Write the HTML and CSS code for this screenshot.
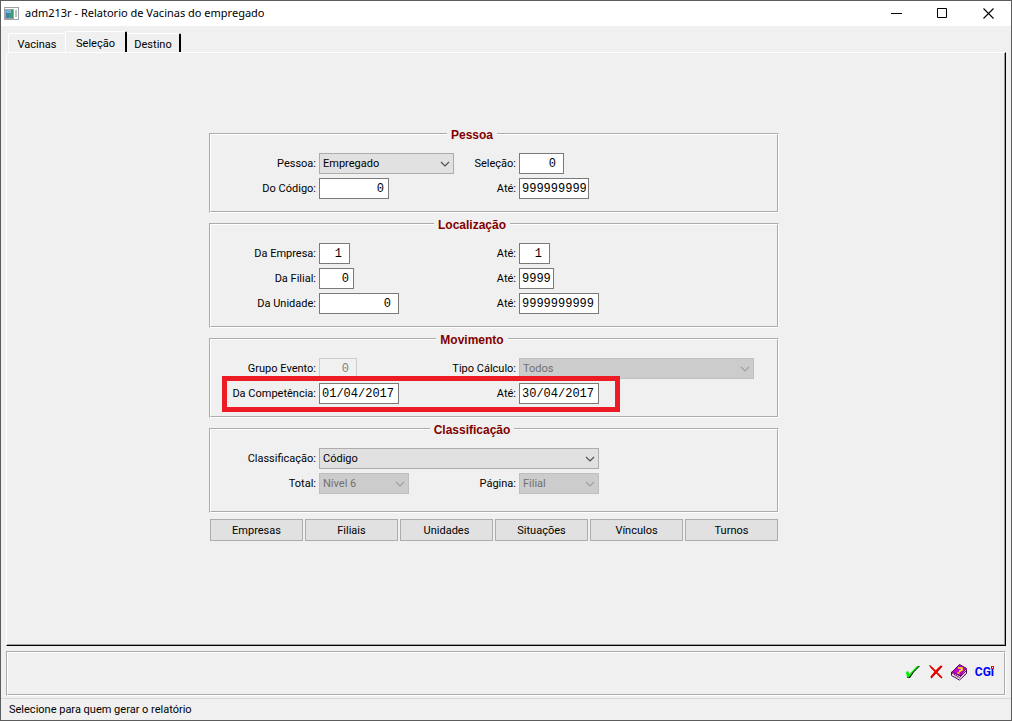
FILE: index.html
```html
<!DOCTYPE html>
<html lang="pt-BR">
<head>
<meta charset="utf-8">
<title>adm213r - Relatorio de Vacinas do empregado</title>
<link rel="stylesheet" href="styles.css">
</head>
<body>
<div class="window">
  <header class="titlebar">
    <svg class="app-icon" width="15" height="13" viewBox="0 0 15 13" shape-rendering="crispEdges" aria-hidden="true">
      <path fill="#9da3a8" d="M0 0h15v13H0z"/><path fill="#fff" d="M1 1h13v1H1zM10 2h4v10h-4z"/>
      <path fill="#3f7fa3" d="M2 3h3v8H2z"/><path fill="#3f9a78" d="M5 3h4v8H5z"/><path fill="#71b3d0" d="M2 3h5v3H2z"/><path fill="#bcc2c8" d="M11 3h2v7h-2z"/>
    </svg>
    <h1 class="title">adm213r - Relatorio de Vacinas do empregado</h1>
    <div class="window-controls">
      <button class="win-button" aria-label="Minimizar"><svg width="11" height="11" viewBox="0 0 11 11"><path d="M0 5.5h11" stroke="#000"/></svg></button>
      <button class="win-button" aria-label="Maximizar"><svg width="11" height="11" viewBox="0 0 11 11"><path d="M.5 .5h9v9h-9z" fill="none" stroke="#000"/></svg></button>
      <button class="win-button" aria-label="Fechar"><svg width="11" height="11" viewBox="0 0 11 11"><path d="M.5 .5l10 10M10.500 .5l-10 10" stroke="#000" stroke-width="1.100"/></svg></button>
    </div>
  </header>

  <nav class="tabs" role="tablist">
    <button class="tab tab-first" role="tab">Vacinas</button>
    <button class="tab tab-active" role="tab" aria-selected="true">Seleção</button>
    <button class="tab tab-last" role="tab">Destino</button>
  </nav>

  <main class="panel">
    <form class="form">
      <fieldset class="group">
        <legend>Pessoa</legend>
        <label for="pessoa">Pessoa:</label>
        <select id="pessoa" class="w-135"><option>Empregado</option></select>
        <label for="selecao">Seleção:</label>
        <input id="selecao" class="w-45 number spaced" value="0">
        <label for="codigo">Do Código:</label>
        <input id="codigo" class="w-70 number" value="0">
        <label for="codigo-ate">Até:</label>
        <input id="codigo-ate" class="w-70" value="999999999">
      </fieldset>

      <fieldset class="group">
        <legend>Localização</legend>
        <label for="empresa">Da Empresa:</label>
        <input id="empresa" class="w-31 number spaced" value="1">
        <label for="empresa-ate">Até:</label>
        <input id="empresa-ate" class="w-31 number spaced" value="1">
        <label for="filial">Da Filial:</label>
        <input id="filial" class="w-35 number" value="0">
        <label for="filial-ate">Até:</label>
        <input id="filial-ate" class="w-35" value="9999">
        <label for="unidade">Da Unidade:</label>
        <input id="unidade" class="w-80 number spaced" value="0">
        <label for="unidade-ate">Até:</label>
        <input id="unidade-ate" class="w-80" value="9999999999">
      </fieldset>

      <fieldset class="group">
        <legend>Movimento</legend>
        <label for="grupo">Grupo Evento:</label>
        <input id="grupo" class="w-38 number spaced" value="0" disabled>
        <label for="tipo">Tipo Cálculo:</label>
        <select id="tipo" class="w-235" disabled><option>Todos</option></select>
        <label for="competencia">Da Competência:</label>
        <input id="competencia" class="w-80" value="01/04/2017">
        <label for="competencia-ate">Até:</label>
        <input id="competencia-ate" class="w-80" value="30/04/2017">
        <div class="highlight"></div>
      </fieldset>

      <fieldset class="group group-tall">
        <legend>Classificação</legend>
        <label for="classificacao">Classificação:</label>
        <select id="classificacao" class="span-all w-280"><option>Código</option></select>
        <label for="total">Total:</label>
        <select id="total" class="w-90" disabled><option>Nível 6</option></select>
        <label for="pagina">Página:</label>
        <select id="pagina" class="w-80" disabled><option>Filial</option></select>
      </fieldset>

      <div class="actions">
        <button type="button">Empresas</button>
        <button type="button">Filiais</button>
        <button type="button">Unidades</button>
        <button type="button">Situações</button>
        <button type="button">Vínculos</button>
        <button type="button">Turnos</button>
      </div>
    </form>
  </main>

  <div class="toolbar">
    <button class="tool" aria-label="Confirmar"><svg width="16" height="16" viewBox="0 0 16 16">
      <path fill="#000" d="M3 8l1 1 1 2 9-9h2L10 8l-4 6H3z"/>
      <path fill="#0e0" d="M2 8l2-1 1.500 3L13 2h2L9 8l-4 5.500H3z"/>
    </svg></button>
    <button class="tool" aria-label="Cancelar"><svg width="16" height="16" viewBox="0 0 16 16">
      <path d="M4 3l11 11M15 2L4 14" stroke="#900" stroke-width="1.500"/><path d="M3 2l5 5 6 6M14 2L9 7l-5 6" fill="none" stroke="#f00" stroke-width="1.500"/><path fill="#888" d="M2 1h2v1H2z"/>
    </svg></button>
    <button class="tool" aria-label="Ajuda"><svg width="18" height="18" viewBox="0 0 18 18">
      <path d="M9.500 5l7 1.500v4l-7 6.500-8-4.500V9z" fill="#fff" stroke="#500050"/>
      <path d="M9.500 1.500l7 4-6.500 7.500-8-4z" fill="#c800c8" stroke="#600060"/>
      <path d="M2 10l7.500 4.500L16 8" fill="none" stroke="#800080"/><path d="M4 12.500l6 3 6-5.500" fill="none" stroke="#aaa"/>
      <path d="M8 5h4v2L9 8.500M7.500 10h2" fill="none" stroke="#ff0" stroke-width="1.400"/>
    </svg></button>
    <button class="tool brand"><span>CGi</span><svg class="brand-dot" width="3" height="3" viewBox="0 0 3 3" aria-hidden="true"><path fill="#f00" d="M0 0h3v3H0z"/><path fill="#fff" d="M1 1h1v1H1z"/></svg></button>
  </div>

  <footer class="status">Selecione para quem gerar o relatório</footer>
</div>
</body>
</html>
```
FILE: styles.css
```css
* { box-sizing: border-box; }

body {
  margin: 0;
  background: #f0f0f0;
  color: #000;
  font: 11px/13px Roboto, "Liberation Sans", sans-serif;
}

button, select { font: inherit; color: inherit; }
button { padding: 0; border: 0; background: none; }

.window {
  display: flex;
  flex-direction: column;
  min-height: 100vh;
  border: 1px solid #5c5c5c;
}

.titlebar {
  display: flex;
  align-items: center;
  height: 25px;
  padding-left: 3px;
  background: #fff;
}
.title {
  flex: 1;
  margin: 0 0 0 6px;
  padding-bottom: 2px;
  font: 11px/16px "Noto Sans", "Open Sans", sans-serif;
}
.window-controls { display: flex; }
.win-button {
  display: grid;
  place-items: center;
  width: 46px;
  height: 25px;
}

.tabs {
  display: flex;
  align-items: flex-end;
  height: 26px;
  padding: 0 7px;
}
.tab {
  height: 19px;
  padding-top: 2px;
  border-top: 1px solid #fff;
  border-radius: 2px 2px 0 0;
}
.tab-first { width: 57px; border-left: 1px solid #fff; }
.tab-active {
  width: 62px;
  height: 21px;
  border-left: 1px solid #fff;
  border-right: 2px solid #000;
}
.tab-last { width: 54px; border-right: 2px solid #000; }

.panel {
  flex: 1;
  display: flex;
  justify-content: center;
  margin: 0 5px;
  padding: 74px 24px 74px 0;
  border: 1px solid #fff;
  border-right-color: #000;
  border-bottom-color: #000;
  box-shadow: inset -1px -1px #a0a0a0;
}

.form {
  display: flex;
  flex-direction: column;
  gap: 4px;
  width: 570px;
}

.group {
  position: relative;
  display: grid;
  grid-template-columns: 105px 119px 75px 1fr;
  gap: 4px 3px;
  align-items: center;
  min-width: 0;
  margin: 0;
  padding: 12px 44px 12px 0;
  border: 2px groove #fff;
}
.group-tall { padding-bottom: 17px; }
.group legend {
  margin: 0 auto;
  padding: 2px 4px 0;
  color: #800000;
  font: bold 12px/12px "Liberation Sans", Arial, sans-serif;
}
.group label { justify-self: end; white-space: nowrap; }

.group input, .group select {
  height: 21px;
  margin: 0;
  border-radius: 0;
}
.group input {
  padding: 0 2px;
  border: 1px solid #7a7a7a;
  background: #fff;
  color: #000;
  font: 12px/19px "Liberation Mono", "Courier New", monospace;
}
.group input.number { padding-right: 4px; text-align: right; }
.group input.spaced { padding-right: 7px; }
.group input:disabled {
  border-color: #ccc;
  background: #f0f0f0;
  color: #808080;
}
.group select {
  appearance: none;
  padding: 0 18px 0 3px;
  border: 1px solid #adadad;
  background: #e1e1e1 url("data:image/svg+xml,%3Csvg xmlns='http://www.w3.org/2000/svg' width='10' height='6'%3E%3Cpath d='M1 1l4 4 4-4' fill='none' stroke='%23505050' stroke-width='1.2'/%3E%3C/svg%3E") no-repeat right 3px center;
}
.group select:disabled {
  border-color: #bfbfbf;
  background-color: #ccc;
  background-image: url("data:image/svg+xml,%3Csvg xmlns='http://www.w3.org/2000/svg' width='10' height='6'%3E%3Cpath d='M1 1l4 4 4-4' fill='none' stroke='%23a0a0a0' stroke-width='1.2'/%3E%3C/svg%3E");
  color: #707070;
  opacity: 1;
}
.span-all { grid-column: 2 / -1; }

.w-31 { width: 31px; }
.w-35 { width: 35px; }
.w-38 { width: 38px; }
.w-45 { width: 45px; }
.w-70 { width: 70px; }
.w-80 { width: 80px; }
.w-90 { width: 90px; }
.w-135 { width: 135px; }
.w-235 { width: 235px; }
.w-280 { width: 280px; }

.highlight {
  position: absolute;
  left: 11px;
  bottom: 4px;
  width: 398px;
  height: 36px;
  border: 5px solid #ed1c24;
  pointer-events: none;
}

.actions {
  display: grid;
  grid-template-columns: repeat(6, 1fr);
  gap: 2px;
  padding: 2px 1px 0;
}
.actions button {
  height: 22px;
  border: 1px solid #adadad;
  background: #e1e1e1;
}

.toolbar {
  display: flex;
  align-items: center;
  justify-content: flex-end;
  gap: 7px;
  height: 45px;
  margin: 5px 5px 2px;
  padding: 0 10px 3px;
  border: 2px groove #fff;
}
.tool { display: flex; align-items: center; }
.brand {
  position: relative;
  color: #00f;
  font: bold 12px/16px Roboto, sans-serif;
}
.brand-dot { position: absolute; top: 2px; right: 0; }

.status {
  height: 22px;
  padding: 4px 8px;
  border-top: 1px solid #d7d7d7;
}
```
